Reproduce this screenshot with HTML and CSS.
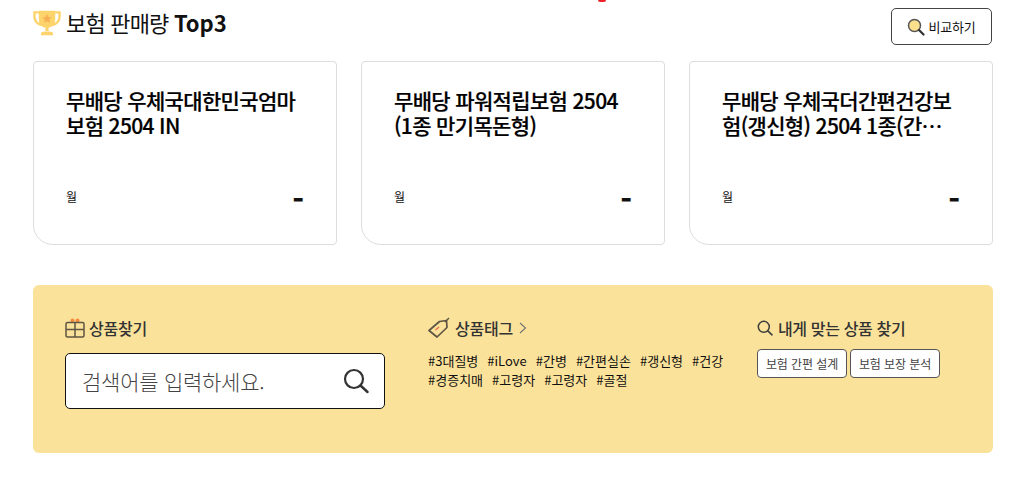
FILE: index.html
```html
<!DOCTYPE html>
<html lang="ko">
<head>
<meta charset="utf-8">
<title>보험 판매량 Top3</title>
<link rel="stylesheet" href="styles.css">
</head>
<body>
<span class="red-mark"></span>
<main class="page">
  <header class="head">
    <h2 class="head-title">
      <svg class="trophy" viewBox="1.200 1.200 25.600 23" width="28" height="26"><path d="M7 3H2.500v4c0 4 3 7 6.500 7.500M21 3h4.500v4c0 4-3 7-6.500 7.500" fill="none" stroke="#fdd36b" stroke-width="2.200"/><path d="M6.500 1.500h15V9c0 5-3 8-7.500 8s-7.500-3-7.500-8z" fill="#fdd36b"/><path d="M12.500 16h3v4h-3z" fill="#fdd36b"/><path d="M8.500 21.500c2-1.500 9-1.500 11 0V24h-11z" fill="#fdd36b"/><path d="M14 4.500l1.300 2.700 2.900.4-2.100 2 .5 2.900-2.600-1.400-2.600 1.400.5-2.900-2.100-2 2.900-.4z" fill="#f7b055"/></svg>
      <span>보험 판매량 <b>Top3</b></span>
    </h2>
    <button class="compare">
      <svg viewBox="0 0 18 18" width="18" height="18"><circle cx="7.500" cy="7.500" r="6" fill="#fbe08e" stroke="#555" stroke-width="1.500"/><path d="M12 12l4.500 4.500" stroke="#333" stroke-width="2.200" stroke-linecap="round"/></svg>
      비교하기
    </button>
  </header>
  <section class="cards">
    <article class="card">
      <h3 class="card-title">무배당 우체국대한민국엄마보험 2504 IN</h3>
      <div class="card-foot"><span class="unit">월</span><strong class="price">-</strong></div>
    </article>
    <article class="card">
      <h3 class="card-title">무배당 파워적립보험 2504<br>(1종 만기목돈형)</h3>
      <div class="card-foot"><span class="unit">월</span><strong class="price">-</strong></div>
    </article>
    <article class="card">
      <h3 class="card-title">무배당 우체국더간편건강보험(갱신형) 2504 1종(간편가입)</h3>
      <div class="card-foot"><span class="unit">월</span><strong class="price">-</strong></div>
    </article>
  </section>
  <section class="panel">
    <div class="col col-search">
      <h4 class="col-title">
        <svg viewBox="0 0 20 20" width="20" height="22"><circle cx="7.500" cy="2.500" r="2" fill="#f58b3c"/><circle cx="12.500" cy="2.500" r="2" fill="#f58b3c"/><rect x="1" y="4.500" width="18" height="14.500" rx="1.500" fill="none" stroke="#5d5543" stroke-width="1.500"/><path d="M10 4.500v14.500M1 11.500h18" stroke="#5d5543" stroke-width="1.500"/></svg>
        상품찾기
      </h4>
      <div class="search">
        <span class="placeholder">검색어를 입력하세요.</span>
        <svg viewBox="0 0 26 26" width="26" height="26"><circle cx="11" cy="11" r="9" fill="none" stroke="#333" stroke-width="2.200"/><path d="M17.500 17.500l7 6.500" stroke="#333" stroke-width="2.400" stroke-linecap="round"/></svg>
      </div>
    </div>
    <div class="col col-tags">
      <h4 class="col-title tag-title">
        <svg viewBox="0 0 24 22" width="24" height="22"><path d="M2 13.500L12.500 4.500l7-1 .5 7L10 20z" fill="none" stroke="#5d5543" stroke-width="1.700" stroke-linejoin="round"/><path d="M18 5l4-4" stroke="#5d5543" stroke-width="1.500"/><path d="M8.500 13l3.500-3" stroke="#ef6a4a" stroke-width="1.300"/></svg>
        상품태그
        <svg class="chev" viewBox="0 0 8 12" width="8" height="12"><path d="M1 1l5.500 5L1 11" fill="none" stroke="#777" stroke-width="1.200"/></svg>
      </h4>
      <ul class="tags">
        <li>#3대질병</li><li>#iLove</li><li>#간병</li><li>#간편실손</li><li>#갱신형</li><li>#건강</li><li>#경증치매</li><li>#고령자</li><li>#고령자</li><li>#골절</li>
      </ul>
    </div>
    <div class="col col-find">
      <h4 class="col-title find-title">
        <svg viewBox="0 0 16 16" width="16" height="16"><circle cx="6.800" cy="6.800" r="5.500" fill="none" stroke="#3d3d3d" stroke-width="1.500"/><path d="M10.800 10.800l4.200 4" stroke="#3d3d3d" stroke-width="1.600" stroke-linecap="round"/></svg>
        내게 맞는 상품 찾기
      </h4>
      <div class="find-btns">
        <button class="find-btn">보험 간편 설계</button>
        <button class="find-btn">보험 보장 분석</button>
      </div>
    </div>
  </section>
</main>
</body>
</html>
```
FILE: styles.css
```css
* { box-sizing: border-box; }
html, body { margin: 0; padding: 0; background: #fff; }
body {
  font-family: "Noto Sans CJK KR", "Noto Sans", sans-serif;
  color: #111;
  height: 490px;
  overflow: hidden;
}
.red-mark {
  position: absolute;
  left: 598px;
  top: 0;
  width: 8px;
  height: 2px;
  background: #f0202a;
  border-radius: 0 0 4px 4px;
}
.page { width: 960px; margin-left: 33px; padding-top: 8px; }
.head {
  display: flex;
  justify-content: space-between;
  align-items: flex-start;
  height: 53px;
  padding-right: 1px;
}
.head-title {
  display: flex;
  align-items: center;
  gap: 5px;
  margin: 0;
  height: 30px;
  font-size: 22px;
  font-weight: 400;
  letter-spacing: -0.8px;
  line-height: 30px;
}
.head-title span { margin-top: -3px; }
.head-title b { font-weight: 700; letter-spacing: 0; }
.trophy { flex: none; margin-top: -1px; }
.compare {
  display: flex;
  align-items: center;
  justify-content: center;
  gap: 3px;
  width: 101px;
  height: 37px;
  padding: 0;
  background: #fff;
  border: 1px solid #444;
  border-radius: 5px;
  font: 400 13px "Noto Sans CJK KR", sans-serif;
  letter-spacing: -0.2px;
  color: #111;
}
.cards { display: flex; gap: 24px; }
.card {
  display: flex;
  flex-direction: column;
  width: 304px;
  height: 184px;
  padding: 26px 32px 0;
  background: #fff;
  border: 1px solid #ddd;
  border-radius: 4px 4px 4px 20px;
}
.card-title {
  margin: 0;
  height: 50px;
  font-size: 21px;
  font-weight: 500;
  line-height: 25px;
  letter-spacing: -0.65px;
  -webkit-text-stroke: 0.2px #000;
  color: #000;
  display: -webkit-box;
  -webkit-box-orient: vertical;
  -webkit-line-clamp: 2;
  overflow: hidden;
  word-break: break-all;
}
.card-foot {
  display: flex;
  justify-content: space-between;
  align-items: center;
  margin-top: 48px;
  height: 24px;
}
.unit { font-size: 12px; line-height: 16px; margin-top: -3px; }
.price { font-size: 32px; font-weight: 700; line-height: 24px; }
.panel {
  display: flex;
  height: 168px;
  margin-top: 40px;
  padding: 32px 0 0 32px;
  background: #fbe29a;
  border-radius: 6px;
}
.col-search { width: 362px; }
.col-tags { width: 330px; }
.col-title {
  display: flex;
  align-items: center;
  gap: 4px;
  height: 22px;
  margin: 0;
  font-size: 16px;
  font-weight: 500;
  color: #333;
  letter-spacing: -0.2px;
}
.search {
  display: flex;
  align-items: center;
  justify-content: space-between;
  width: 320px;
  height: 56px;
  margin-top: 14px;
  padding: 0 15px 0 16px;
  background: #fff;
  border: 1px solid #111;
  border-radius: 5px;
}
.placeholder { font-size: 21px; font-weight: 300; color: #444; letter-spacing: -0.25px; }
.tag-title { gap: 4px; }
.chev { margin-left: 2px; }
.tags {
  display: flex;
  flex-wrap: wrap;
  gap: 0 9px;
  margin: 12px 0 0;
  padding: 0 0 0 1px;
  list-style: none;
  font-size: 13px;
  line-height: 19px;
  color: #111;
}
.find-title { gap: 5px; letter-spacing: -0.35px; }
.find-btns { display: flex; gap: 3px; margin-top: 10px; }
.find-btn {
  width: 90px;
  height: 29px;
  padding: 0;
  background: #fff;
  border: 1px solid #555;
  border-radius: 4px;
  font: 400 12px "Noto Sans CJK KR", sans-serif;
  letter-spacing: -0.1px;
  color: #444;
}
```
